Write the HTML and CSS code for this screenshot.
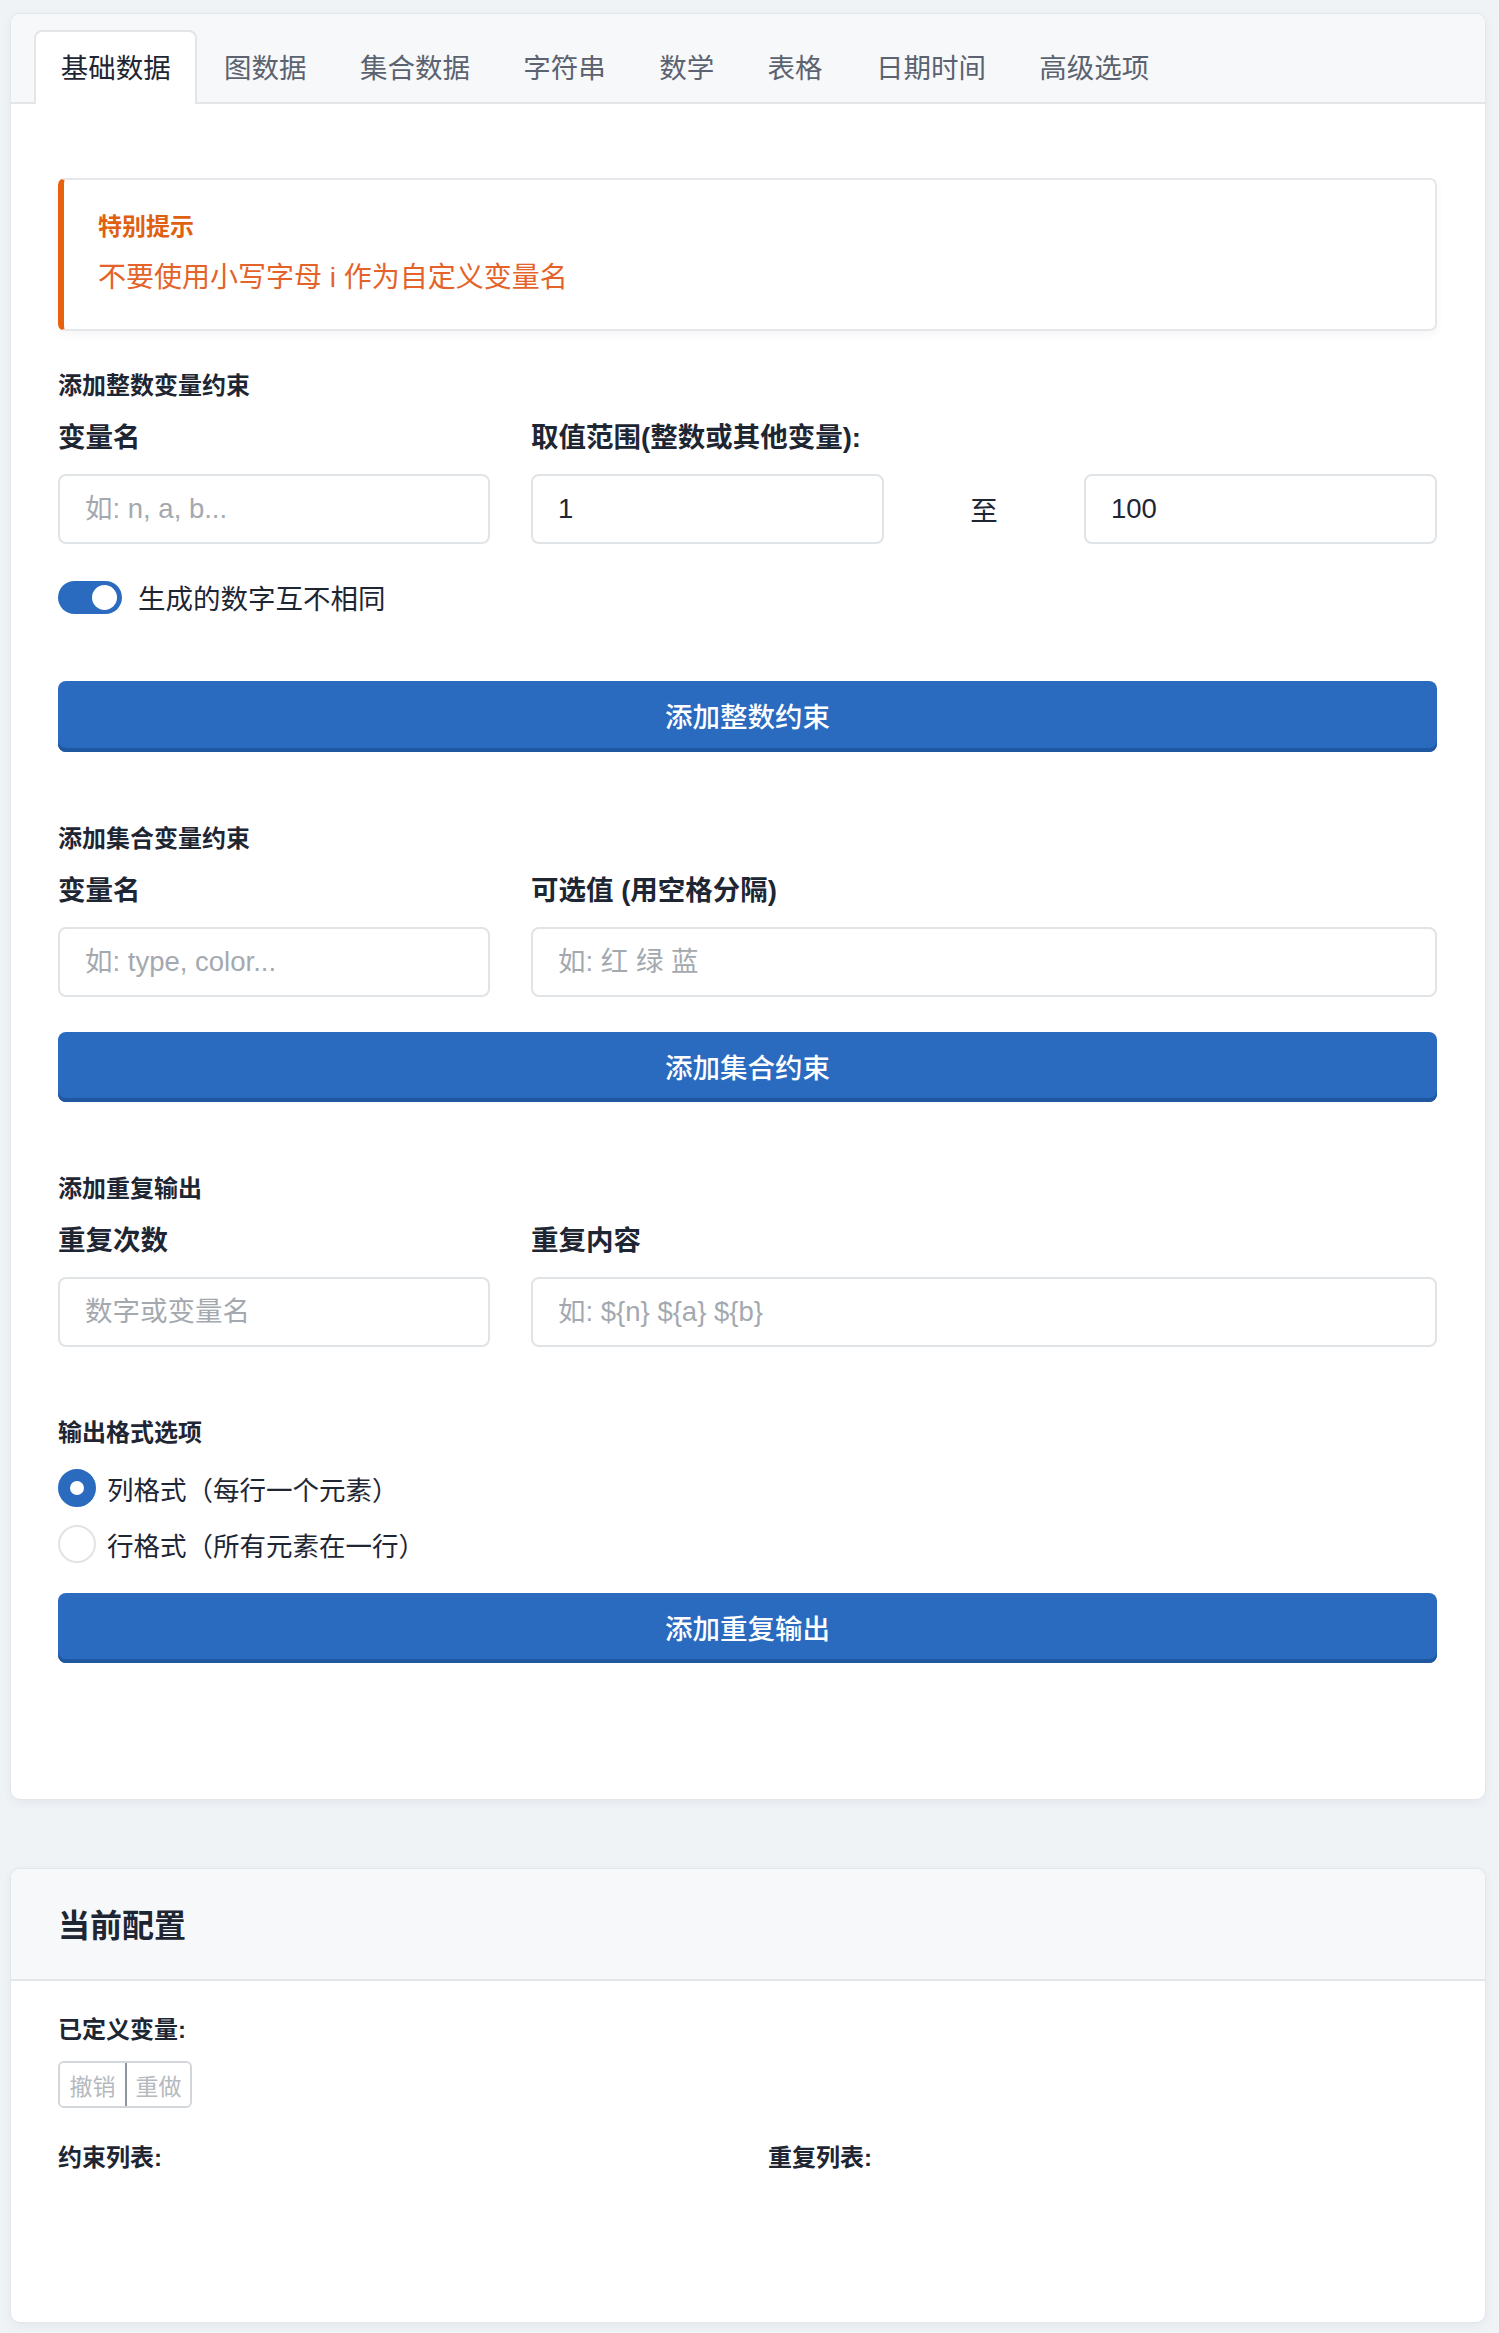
FILE: index.html
```html
<!DOCTYPE html>
<html lang="zh-CN">
<head>
<meta charset="utf-8">
<title>数据生成器</title>
<link rel="stylesheet" href="styles.css">
</head>
<body>
<div class="page">
  <section class="card">
    <nav class="tabs">
      <span class="tab active">基础数据</span>
      <span class="tab">图数据</span>
      <span class="tab">集合数据</span>
      <span class="tab">字符串</span>
      <span class="tab">数学</span>
      <span class="tab">表格</span>
      <span class="tab">日期时间</span>
      <span class="tab">高级选项</span>
    </nav>
    <div class="card-body main-body">
      <div class="alert">
        <div class="alert-title">特别提示</div>
        <div class="alert-text">不要使用小写字母 i 作为自定义变量名</div>
      </div>

      <div class="section s-int">
        <div class="section-title">添加整数变量约束</div>
        <div class="row">
          <div class="field">
            <label class="label">变量名</label>
            <input class="input" type="text" placeholder="如: n, a, b...">
          </div>
          <div class="field">
            <label class="label">取值范围(整数或其他变量):</label>
            <div class="range">
              <input class="input" type="text" value="1">
              <span class="range-sep">至</span>
              <input class="input" type="text" value="100">
            </div>
          </div>
        </div>
        <label class="switch-row">
          <span class="switch"><span class="knob"></span></span>
          <span>生成的数字互不相同</span>
        </label>
        <button class="btn btn-int">添加整数约束</button>
      </div>

      <div class="section s-set">
        <div class="section-title">添加集合变量约束</div>
        <div class="row">
          <div class="field">
            <label class="label">变量名</label>
            <input class="input" type="text" placeholder="如: type, color...">
          </div>
          <div class="field">
            <label class="label">可选值 (用空格分隔)</label>
            <input class="input" type="text" placeholder="如: 红 绿 蓝">
          </div>
        </div>
        <button class="btn btn-set">添加集合约束</button>
      </div>

      <div class="section s-rep">
        <div class="section-title">添加重复输出</div>
        <div class="row">
          <div class="field">
            <label class="label">重复次数</label>
            <input class="input" type="text" placeholder="数字或变量名">
          </div>
          <div class="field">
            <label class="label">重复内容</label>
            <input class="input" type="text" placeholder="如: ${n} ${a} ${b}">
          </div>
        </div>
      </div>

      <div class="section s-fmt">
        <div class="section-title">输出格式选项</div>
        <div class="radios">
          <label class="radio-row"><span class="radio checked"></span><span class="radio-text">列格式（每行一个元素）</span></label>
          <label class="radio-row"><span class="radio"></span><span class="radio-text">行格式（所有元素在一行）</span></label>
        </div>
        <button class="btn btn-rep">添加重复输出</button>
      </div>
    </div>
  </section>

  <section class="card config-card">
    <header class="config-header">当前配置</header>
    <div class="card-body config-body">
      <div class="sub-title">已定义变量:</div>
      <div class="btn-group">
        <button class="btn-mini">撤销</button>
        <button class="btn-mini">重做</button>
      </div>
      <div class="lists">
        <div class="sub-title">约束列表:</div>
        <div class="sub-title">重复列表:</div>
      </div>
    </div>
  </section>
</div>
</body>
</html>
```

FILE: styles.css
```css
* {
  box-sizing: border-box;
}

html, body {
  margin: 0;
  padding: 0;
}

body {
  background: #f0f3f6;
  font-family: "Liberation Sans", "Noto Sans CJK SC", sans-serif;
  color: #1e2633;
  font-size: 27.5px;
}

.page {
  padding: 13px 13px 8px 10px;
}

.card {
  background: #ffffff;
  border: 1px solid #e3e6ea;
  border-radius: 10px;
  box-shadow: 0 3px 10px rgba(30, 40, 60, 0.06);
  overflow: hidden;
}

/* Tabs */
.tabs {
  display: flex;
  background: #f7f8fa;
  border-bottom: 2px solid #e3e5e8;
  padding: 16px 23px 0;
}

.tab {
  display: flex;
  align-items: center;
  height: 74px;
  margin-bottom: -2px;
  padding: 0 24.7px 4px;
  border: 2px solid transparent;
  border-bottom: none;
  border-radius: 8px 8px 0 0;
  color: #5c6370;
  font-family: "Noto Sans CJK SC", sans-serif;
  font-size: 27.5px;
  white-space: nowrap;
}

.tab.active {
  background: #ffffff;
  border-color: #e3e5e8;
  color: #1e2633;
}

.card-body {
  padding: 0 48px 0 47px;
}

.main-body {
  padding-top: 74px;
  padding-bottom: 136px;
}

/* Alert */
.alert {
  border: 2px solid #e5e7ea;
  border-left: 6px solid #e8610e;
  border-radius: 7px;
  padding: 32px 34px 31px;
  box-shadow: 0 4px 10px rgba(0, 0, 0, 0.04);
}

.alert-title {
  color: #e06012;
  font-weight: 700;
  font-size: 24px;
  line-height: 30px;
}

.alert-text {
  margin-top: 16px;
  color: #e4632a;
  font-size: 28px;
  line-height: 40px;
}

/* Sections */
.section-title {
  font-size: 24px;
  font-weight: 700;
  line-height: 34px;
  color: #1e2633;
}

.s-int { margin-top: 38px; }
.s-set { margin-top: 70px; }
.s-rep { margin-top: 70px; }
.s-fmt { margin-top: 69px; }

.row {
  display: grid;
  grid-template-columns: 432px 1fr;
  column-gap: 41px;
  margin-top: 15px;
}

.field {
  display: flex;
  flex-direction: column;
}

.label {
  font-size: 27.5px;
  font-weight: 600;
  line-height: 40px;
  margin-bottom: 16px;
  color: #1e2633;
}

.input {
  width: 100%;
  height: 70px;
  border: 2px solid #e1e4e7;
  border-radius: 8px;
  padding: 0 25px;
  font-family: "Liberation Sans", "Noto Sans CJK SC", sans-serif;
  font-size: 27.5px;
  color: #1e2633;
  background: #ffffff;
  outline: none;
}

.input::placeholder {
  color: #a4a9af;
}

.range {
  display: grid;
  grid-template-columns: 1fr 200px 1fr;
}

.range-sep {
  display: flex;
  align-items: center;
  justify-content: center;
  font-size: 27.5px;
  color: #1e2633;
}

/* Switch */
.switch-row {
  display: flex;
  align-items: center;
  gap: 16px;
  height: 40px;
  margin-top: 33px;
  font-size: 27.5px;
  color: #1e2633;
}

.switch {
  position: relative;
  width: 64px;
  height: 33px;
  border-radius: 17px;
  background: #2a6bbf;
  flex: none;
}

.knob {
  position: absolute;
  top: 4px;
  right: 5px;
  width: 25px;
  height: 25px;
  border-radius: 50%;
  background: #ffffff;
}

/* Buttons */
.btn {
  display: block;
  width: 100%;
  height: 70px;
  border: none;
  border-radius: 8px;
  background: #2a6bbf;
  box-shadow: inset 0 -4px 0 #1f58a0;
  color: #ffffff;
  font-family: "Noto Sans CJK SC", sans-serif;
  font-size: 27.5px;
  font-weight: 500;
  padding: 0 0 3px;
}

.btn-int { margin-top: 64px; height: 71px; }
.btn-set { margin-top: 35px; }
.btn-rep { margin-top: 25px; }

/* Radios */
.radios {
  display: flex;
  flex-direction: column;
  gap: 8px;
  margin-top: 14px;
}

.radio-row {
  display: flex;
  align-items: center;
  gap: 11px;
  height: 48px;
  font-size: 27.5px;
  color: #1e2633;
}

.radio-text {
  font-size: 26.5px;
}

.radio {
  width: 38px;
  height: 38px;
  border-radius: 50%;
  border: 2px solid #e1e3e6;
  background: #ffffff;
  flex: none;
}

.radio.checked {
  border: 12px solid #2a6bbf;
}

/* Config card */
.config-card {
  margin-top: 68px;
}

.config-header {
  height: 112px;
  background: #f7f8fa;
  border-bottom: 2px solid #e3e5e8;
  padding: 0 47px 2px;
  display: flex;
  align-items: center;
  font-size: 32px;
  font-weight: 600;
  color: #1e2633;
}

.config-body {
  padding-top: 32px;
  padding-bottom: 147px;
}

.sub-title {
  font-size: 24px;
  font-weight: 700;
  line-height: 34px;
  color: #1e2633;
}

.btn-group {
  display: inline-flex;
  margin-top: 14px;
  border: 2px solid #d2d5d9;
  border-radius: 6px;
  overflow: hidden;
}

.btn-mini {
  width: 65px;
  height: 43px;
  border: none;
  background: #ffffff;
  color: #b5b9be;
  font-family: "Noto Sans CJK SC", sans-serif;
  font-size: 23px;
  padding: 0;
}

.btn-mini + .btn-mini {
  border-left: 2px solid #8f959c;
}

.lists {
  display: grid;
  grid-template-columns: 1fr 1fr;
  column-gap: 41px;
  margin-top: 33px;
}
```
